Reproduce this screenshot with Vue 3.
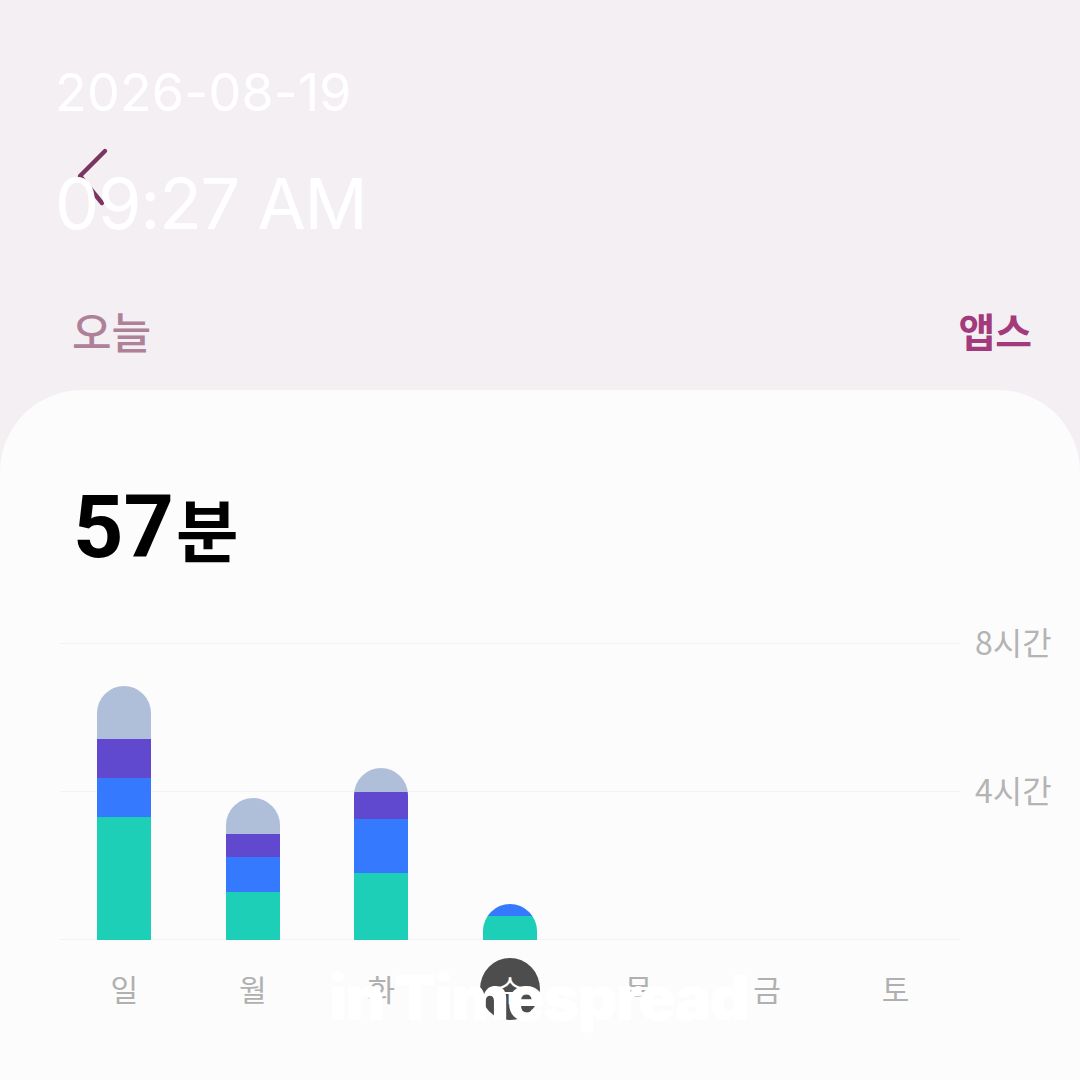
<script setup>
const days = [
  { label: '일', segs: [['#1dcfb6', 123], ['#3579fe', 39], ['#6149cf', 39], ['#b0bfd9', 53]] },
  { label: '월', segs: [['#1dcfb6', 48], ['#3579fe', 35], ['#6149cf', 23], ['#b0bfd9', 36]] },
  { label: '화', segs: [['#1dcfb6', 67], ['#3579fe', 54], ['#6149cf', 27], ['#b0bfd9', 24]] },
  { label: '수', today: true, segs: [['#1dcfb6', 24], ['#3579fe', 12]] },
  { label: '목', segs: [] },
  { label: '금', segs: [] },
  { label: '토', segs: [] }
]
</script>

<template>
  <div class="page">
    <header class="head">
      <svg class="back" width="40" height="64" viewBox="0 0 40 64" aria-hidden="true">
        <path d="M31 6 L6 31 L28 58" fill="none" stroke="#7a3560" stroke-width="4.4" stroke-linecap="round" stroke-linejoin="round" />
      </svg>
      <div class="date">2026-08-19</div>
      <div class="time">09:27 AM</div>
    </header>

    <nav class="tabs">
      <span class="tab">오늘</span>
      <span class="tab active">앱스</span>
    </nav>

    <section class="sheet">
      <div class="total"><span class="num">57</span><span class="unit">분</span></div>

      <div class="chart">
        <div class="plot">
          <div class="lines">
            <div class="line"></div>
            <div class="line"></div>
            <div class="line last"></div>
          </div>
          <div class="bars">
            <div v-for="d in days" :key="d.label" class="slot">
              <div v-if="d.segs.length" class="bar">
                <div v-for="s in d.segs" :key="s[0]" class="seg" :style="{ background: s[0], height: s[1] + 'px' }"></div>
              </div>
            </div>
          </div>
        </div>
        <div class="axis">
          <span>8시간</span>
          <span>4시간</span>
        </div>
      </div>

      <div class="days">
        <div v-for="d in days" :key="d.label" class="day" :class="{ today: d.today }"><span class="glyph">{{ d.label }}</span></div>
      </div>
    </section>

    <div class="mark">in Timespread</div>
  </div>
</template>

<style scoped>
.page {
  position: relative;
  width: 1080px;
  height: 1080px;
  overflow: hidden;
  background: #f4eff3;
  font-family: Inter, "Noto Sans CJK KR", sans-serif;
}
.head {
  position: relative;
  height: 270px;
  padding: 62px 0 0 55px;
  box-sizing: border-box;
  color: #fff;
}
.back {
  position: absolute;
  left: 74px;
  top: 145px;
}
.date {
  font-size: 52px;
  line-height: 62px;
  letter-spacing: 0.2px;
}
.time {
  position: relative;
  margin-top: 38px;
  font-size: 70px;
  line-height: 84px;
  letter-spacing: -1.2px;
}
.tabs {
  display: flex;
  justify-content: space-between;
  height: 120px;
  padding: 34px 48px 0 72px;
  box-sizing: border-box;
  font-family: "Noto Sans CJK KR", sans-serif;
}
.tab {
  font-size: 43px;
  line-height: 52px;
  font-weight: 500;
  color: #ae8199;
}
.tab.active {
  font-size: 40px;
  color: #a33a7c;
  font-weight: 700;
}
.sheet {
  height: 690px;
  background: #fcfcfc;
  border-radius: 82px 82px 0 0;
  padding-top: 87px;
  box-sizing: border-box;
}
.total {
  display: flex;
  align-items: baseline;
  height: 166px;
  padding-left: 73px;
  color: #000;
  font-weight: 700;
  font-family: Roboto, "Noto Sans CJK KR", sans-serif;
}
.num {
  font-size: 88px;
  line-height: 100px;
}
.unit {
  margin-left: 2px;
  font-size: 68px;
  line-height: 100px;
  font-family: "Noto Sans CJK KR", sans-serif;
}
.chart {
  display: flex;
  padding-left: 60px;
}
.plot {
  display: grid;
  width: 900px;
  height: 298px;
}
.lines,
.bars {
  grid-area: 1 / 1;
}
.lines {
  display: flex;
  flex-direction: column;
}
.line {
  height: 148px;
  border-top: 1.5px solid #f3f1f2;
  box-sizing: border-box;
}
.line.last {
  height: 2px;
}
.bars {
  display: grid;
  grid-template-columns: repeat(7, 1fr);
  height: 297px;
}
.slot {
  display: flex;
  justify-content: center;
  align-items: flex-end;
}
.bar {
  display: flex;
  flex-direction: column-reverse;
  width: 54px;
  border-radius: 27px 27px 0 0;
  overflow: hidden;
}
.axis {
  display: flex;
  flex-direction: column;
  margin: -23px 0 0 15px;
  gap: 106px;
  font-family: "Noto Sans CJK KR", sans-serif;
  font-size: 32px;
  line-height: 42px;
  color: #b4b4b4;
  white-space: nowrap;
}
.days {
  display: grid;
  grid-template-columns: repeat(7, 128.57px);
  padding: 17px 0 0 60px;
  font-family: "Noto Sans CJK KR", sans-serif;
  font-size: 30px;
  color: #b0b0b0;
}
.day {
  justify-self: center;
  width: 60px;
  height: 62px;
  line-height: 60px;
  text-align: center;
  border-radius: 50%;
}
.day.today {
  background: #4d4d4d;
  color: #fff;
}
.mark {
  position: absolute;
  left: 329px;
  top: 963px;
  font-family: Inter, sans-serif;
  font-weight: 900;
  font-size: 62px;
  line-height: 70px;
  letter-spacing: -2px;
  color: #fff;
  white-space: nowrap;
}
</style>
